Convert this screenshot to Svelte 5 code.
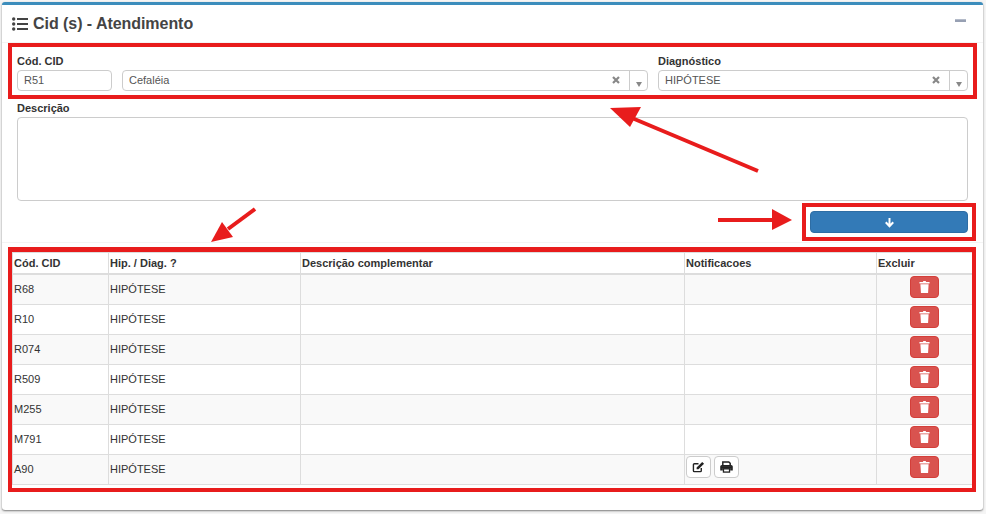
<script>
  const rows = [
    { cid: "R68" },
    { cid: "R10" },
    { cid: "R074" },
    { cid: "R509" },
    { cid: "M255" },
    { cid: "M791" },
    { cid: "A90", notify: true }
  ]
</script>

<div class="page">
  <section class="box">
    <header class="box-header">
      <svg class="list-icon" viewBox="0 0 16 14" width="16" height="14">
        <circle cx="1.7" cy="2" r="1.7" />
        <circle cx="1.7" cy="7" r="1.7" />
        <circle cx="1.7" cy="12" r="1.7" />
        <rect x="5" y="1" width="11" height="2" />
        <rect x="5" y="6" width="11" height="2" />
        <rect x="5" y="11" width="11" height="2" />
      </svg>
      <h3>Cid (s) - Atendimento</h3>
      <span class="minimize"></span>
    </header>

    <div class="box-body">
      <div class="form-row">
        <div class="field cod">
          <span class="label">Cód. CID</span>
          <div class="control">R51</div>
        </div>
        <div class="field grow">
          <span class="label">&nbsp;</span>
          <div class="control select">
            <span class="value">Cefaléia</span>
            <svg class="clear" viewBox="0 0 8 8" width="8" height="8">
              <path d="M1 1L7 7M7 1L1 7" stroke="#888" stroke-width="2.2" />
            </svg>
            <span class="caret-box"><i></i></span>
          </div>
        </div>
        <div class="field diag">
          <span class="label">Diagnóstico</span>
          <div class="control select">
            <span class="value">HIPÓTESE</span>
            <svg class="clear" viewBox="0 0 8 8" width="8" height="8">
              <path d="M1 1L7 7M7 1L1 7" stroke="#888" stroke-width="2.2" />
            </svg>
            <span class="caret-box"><i></i></span>
          </div>
        </div>
      </div>

      <div class="desc">
        <span class="label">Descrição</span>
        <div class="textarea"></div>
      </div>

      <div class="actions">
        <button class="btn-add" aria-label="Adicionar">
          <svg viewBox="0 0 10 10" width="11" height="11">
            <path d="M5 .8v7.4M1.6 4.8L5 8.4L8.4 4.8" fill="none" stroke="#fff" stroke-width="1.8" />
          </svg>
        </button>
      </div>
    </div>

    <div class="table-wrap">
      <table>
        <colgroup>
          <col style="width:96px" />
          <col style="width:192px" />
          <col style="width:384px" />
          <col style="width:192px" />
          <col style="width:96px" />
        </colgroup>
        <thead>
          <tr>
            <th>Cód. CID</th>
            <th>Hip. / Diag. ?</th>
            <th>Descrição complementar</th>
            <th>Notificacoes</th>
            <th>Excluir</th>
          </tr>
        </thead>
        <tbody>
          {#each rows as row}
            <tr>
              <td>{row.cid}</td>
              <td>HIPÓTESE</td>
              <td></td>
              <td class="btns">
                {#if row.notify}
                  <span class="btn-default">
                    <svg viewBox="0 0 14 13" width="13" height="12">
                      <path d="M10 7.5V10.5a1 1 0 0 1-1 1H2.5a1 1 0 0 1-1-1V4a1 1 0 0 1 1-1H7" fill="none" stroke="#222" stroke-width="1.5" />
                      <path d="M5 7L11 1l2 2L7 9H5z" fill="#222" />
                    </svg>
                  </span>
                  <span class="btn-default">
                    <svg viewBox="0 0 14 13" width="13" height="12">
                      <path d="M3 5V1h6.5L11 2.5V5M3 9.5H1V6a1 1 0 0 1 1-1h10a1 1 0 0 1 1 1v3.5h-2" fill="none" stroke="#222" stroke-width="1.6" />
                      <rect x="1" y="5.5" width="12" height="3" fill="#222" />
                      <rect x="3.7" y="8.5" width="6.6" height="3.5" fill="#fff" stroke="#222" stroke-width="1.4" />
                    </svg>
                  </span>
                {/if}
              </td>
              <td class="btns center">
                <span class="btn-danger">
                  <svg viewBox="0 0 12 13" width="11" height="12">
                    <path d="M4.2 1L4.8 0h2.4l.6 1H11.5v1.6H.5V1z" fill="#fff" />
                    <path d="M1.5 3.4h9l-.6 9.6H2.1z" fill="#fff" />
                  </svg>
                </span>
              </td>
            </tr>
          {/each}
        </tbody>
      </table>
    </div>
  </section>

  <!-- marcacoes vermelhas por cima da tela -->
  <div class="mark m-form"></div>
  <div class="mark m-btn"></div>
  <div class="mark m-table"></div>
  <svg class="arrows" viewBox="0 0 986 514" width="986" height="514">
    <g fill="#e81c1c" stroke="#e81c1c">
      <line x1="758" y1="171" x2="632" y2="118" stroke-width="4" />
      <polygon points="610,108 641,107 630,127" stroke="none" />
      <line x1="718" y1="220" x2="774" y2="220" stroke-width="4" />
      <polygon points="772,209 792,220 772,230" stroke="none" />
      <line x1="255" y1="209" x2="228" y2="229" stroke-width="4" />
      <polygon points="211,242 222,222 233,237" stroke="none" />
    </g>
  </svg>
</div>

<style>
  :global(body) {
    background: #f5f5f5;
    font-family: "Liberation Sans", Arial, sans-serif;
  }

  .page {
    position: relative;
    width: 986px;
    height: 514px;
    padding: 2px 3px 2px 2px;
    box-sizing: border-box;
    overflow: hidden;
    color: #333;
    font-size: 12px;
  }

  .box {
    height: 508px;
    box-sizing: border-box;
    background: #fff;
    border-top: 3px solid #3c8dbc;
    border-radius: 3px;
    box-shadow: 0 1px 2px rgba(0, 0, 0, 0.5);
  }

  .box-header {
    display: flex;
    align-items: center;
    height: 38px;
    padding: 0 17px 0 10px;
    box-sizing: border-box;
    border-bottom: 1px solid #f4f4f4;
  }

  .list-icon {
    fill: #444;
    margin-right: 5px;
  }

  h3 {
    margin: 0;
    font-size: 16px;
    font-weight: bold;
    color: #444;
    flex: 1;
    letter-spacing: -0.05px;
  }

  .minimize {
    width: 11px;
    height: 2px;
    background: #97a0b3;
    margin-bottom: 7px;
    border-top: 1px solid #b4bbc9;
  }

  .box-body {
    padding: 11px 15px 0 15px;
    height: 200px;
    box-sizing: border-box;
    border-bottom: 1px solid #f4f4f4;
  }

  .form-row {
    display: flex;
    gap: 10px;
  }

  .field {
    display: flex;
    flex-direction: column;
  }

  .cod {
    width: 95px;
  }

  .grow {
    flex: 1;
  }

  .diag {
    width: 310px;
  }

  .label {
    font-weight: bold;
    font-size: 11px;
    line-height: 14px;
    height: 14px;
    margin-bottom: 2px;
    color: #333;
  }

  .control {
    height: 21px;
    box-sizing: border-box;
    border: 1px solid #ccc;
    border-radius: 4px;
    padding: 0 6px 2px;
    display: flex;
    align-items: center;
    font-size: 11px;
    color: #555;
  }

  .select {
    padding-right: 0;
  }

  .value {
    flex: 1;
  }

  .clear {
    margin-right: 9px;
  }

  .caret-box {
    width: 18px;
    height: 19px;
    margin-bottom: -2px;
    border-left: 1px solid #ccc;
    display: flex;
    justify-content: center;
    align-items: flex-end;
    padding-bottom: 3px;
    box-sizing: border-box;
  }

  .caret-box i {
    border-top: 5px solid #888;
    border-left: 3px solid transparent;
    border-right: 3px solid transparent;
  }

  .desc {
    margin-top: 11px;
    display: flex;
    flex-direction: column;
  }

  .desc .label {
    height: 12px;
    line-height: 12px;
    margin-bottom: 3px;
  }

  .textarea {
    height: 84px;
    box-sizing: border-box;
    border: 1px solid #ccc;
    border-radius: 4px;
  }

  .actions {
    display: flex;
    justify-content: flex-end;
    margin-top: 10px;
  }

  .btn-add {
    width: 158px;
    height: 22px;
    padding: 0;
    background: #337ab7;
    border: 1px solid #2e6da4;
    border-radius: 4px;
    display: flex;
    align-items: center;
    justify-content: center;
  }

  .table-wrap {
    padding: 9px 10px 0;
  }

  table {
    width: 960px;
    table-layout: fixed;
    border-collapse: collapse;
    font-size: 11px;
  }

  th, td {
    border: 1px solid #ddd;
    padding: 0 1px;
    text-align: left;
    color: #333;
  }

  th {
    height: 20px;
    font-weight: bold;
    border-bottom-width: 2px;
  }

  td {
    box-sizing: border-box;
    height: 30px;
    padding-top: 8px;
    vertical-align: top;
  }

  tbody tr:nth-child(odd) {
    background: #f9f9f9;
  }

  .btns {
    padding: 1px 1px 0;
  }

  .center {
    padding: 1px 2px 0;
    text-align: center;
  }

  .btn-default {
    display: inline-flex;
    align-items: center;
    justify-content: center;
    width: 25px;
    height: 22px;
    box-sizing: border-box;
    background: #fff;
    border: 1px solid #ccc;
    border-radius: 4px;
  }

  .btn-danger {
    display: inline-flex;
    align-items: center;
    justify-content: center;
    width: 29px;
    height: 22px;
    background: #d9534f;
    border: 1px solid #d43f3a;
    box-sizing: border-box;
    border-radius: 4px;
  }

  .mark {
    position: absolute;
    border: 4px solid #e81c1c;
    box-sizing: border-box;
    pointer-events: none;
  }

  .m-form {
    left: 8px;
    top: 43px;
    width: 969px;
    height: 56px;
  }

  .m-btn {
    left: 802px;
    top: 203px;
    width: 174px;
    height: 38px;
  }

  .m-table {
    left: 8px;
    top: 247px;
    width: 968px;
    height: 245px;
    border-top-width: 5px;
  }

  .arrows {
    position: absolute;
    left: 0;
    top: 0;
    pointer-events: none;
  }
</style>
